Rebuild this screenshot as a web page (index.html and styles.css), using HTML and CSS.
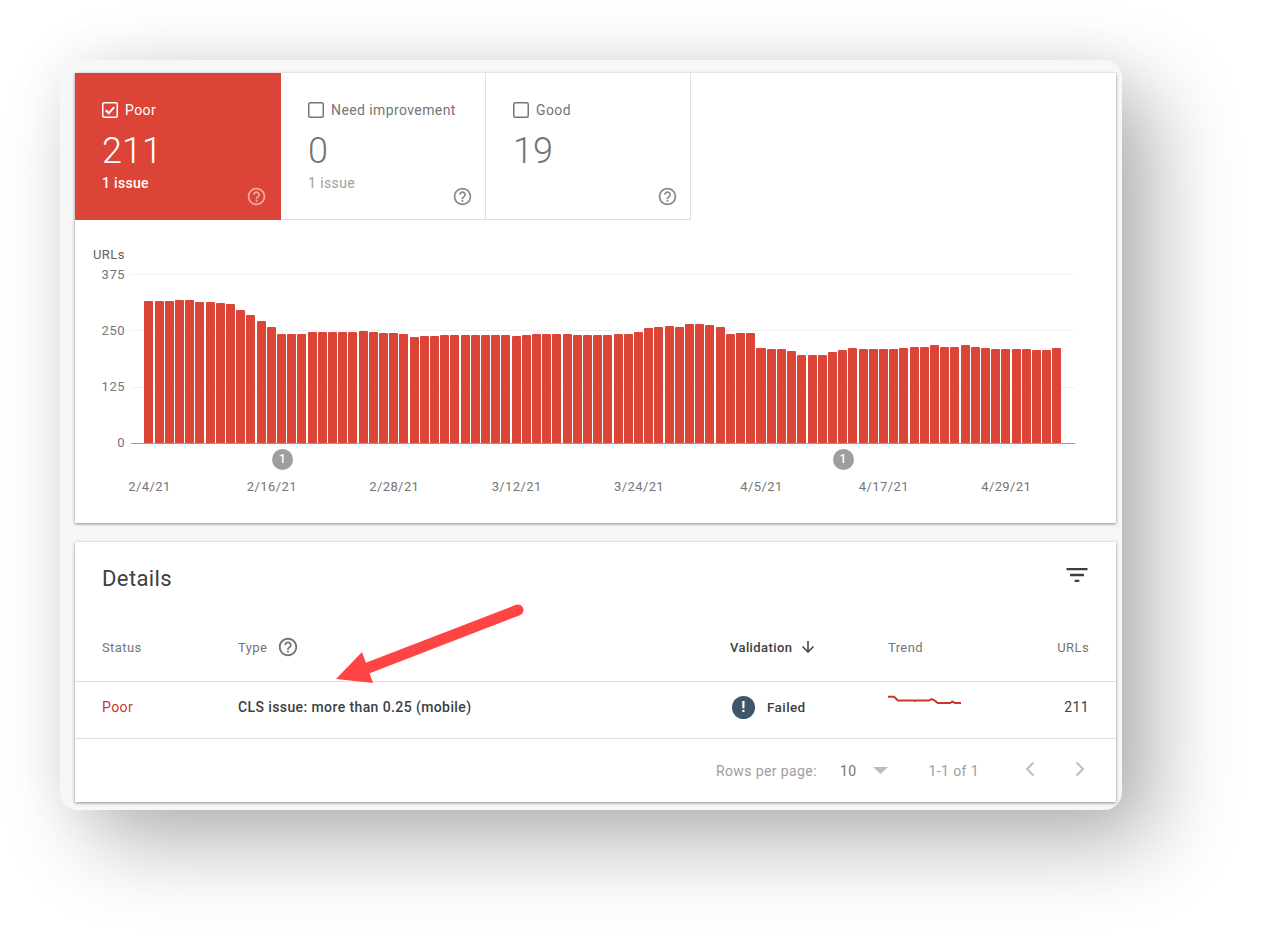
FILE: index.html
```html
<!DOCTYPE html>
<html lang="en">
<head>
<meta charset="utf-8">
<title>Core Web Vitals</title>
<link rel="stylesheet" href="styles.css">
</head>
<body>
<main class="frame">
  <section class="card card-chart">
    <div class="tiles">
      <div class="tile tile-on">
        <div class="tile-label"><svg class="check" viewBox="0 0 16 16"><rect x=".75" y=".75" width="14.5" height="14.5" rx="1.5"/><path d="M3.8 8.2l3 3 5.4-6"/></svg>Poor</div>
        <div class="tile-num">211</div>
        <div class="tile-sub">1 issue</div>
        <svg class="help" viewBox="0 0 24 24"><path d="M11 18h2v-2h-2v2zm1-16C6.48 2 2 6.48 2 12s4.48 10 10 10 10-4.48 10-10S17.52 2 12 2zm0 18c-4.41 0-8-3.59-8-8s3.59-8 8-8 8 3.59 8 8-3.59 8-8 8zm0-14c-2.21 0-4 1.79-4 4h2c0-1.1.9-2 2-2s2 .9 2 2c0 2-3 1.75-3 5h2c0-2.25 3-2.5 3-5 0-2.21-1.79-4-4-4z"/></svg>
      </div>
      <div class="tile">
        <div class="tile-label"><svg class="check" viewBox="0 0 16 16"><rect x=".75" y=".75" width="14.5" height="14.5" rx="1.5"/></svg>Need improvement</div>
        <div class="tile-num">0</div>
        <div class="tile-sub">1 issue</div>
        <svg class="help" viewBox="0 0 24 24"><path d="M11 18h2v-2h-2v2zm1-16C6.48 2 2 6.48 2 12s4.48 10 10 10 10-4.48 10-10S17.52 2 12 2zm0 18c-4.41 0-8-3.59-8-8s3.59-8 8-8 8 3.59 8 8-3.59 8-8 8zm0-14c-2.21 0-4 1.79-4 4h2c0-1.1.9-2 2-2s2 .9 2 2c0 2-3 1.75-3 5h2c0-2.25 3-2.5 3-5 0-2.21-1.79-4-4-4z"/></svg>
      </div>
      <div class="tile">
        <div class="tile-label"><svg class="check" viewBox="0 0 16 16"><rect x=".75" y=".75" width="14.5" height="14.5" rx="1.5"/></svg>Good</div>
        <div class="tile-num">19</div>
        <svg class="help" viewBox="0 0 24 24"><path d="M11 18h2v-2h-2v2zm1-16C6.48 2 2 6.48 2 12s4.48 10 10 10 10-4.48 10-10S17.52 2 12 2zm0 18c-4.41 0-8-3.59-8-8s3.59-8 8-8 8 3.59 8 8-3.59 8-8 8zm0-14c-2.21 0-4 1.79-4 4h2c0-1.1.9-2 2-2s2 .9 2 2c0 2-3 1.75-3 5h2c0-2.25 3-2.5 3-5 0-2.21-1.79-4-4-4z"/></svg>
      </div>
    </div>
    <div class="chart-title">URLs</div>
    <div class="axis">
      <div class="axis-row"><span class="axis-label">375</span><span class="axis-line"></span></div>
      <div class="axis-row"><span class="axis-label">250</span><span class="axis-line"></span></div>
      <div class="axis-row"><span class="axis-label">125</span><span class="axis-line"></span></div>
      <div class="axis-row"><span class="axis-label">0</span><span class="axis-line axis-base"></span></div>
      <div class="bars">
<i style="height:142px"></i><i style="height:142px"></i><i style="height:142px"></i><i style="height:143.3px"></i><i style="height:143.3px"></i><i style="height:141px"></i><i style="height:141px"></i><i style="height:140px"></i><i style="height:138.7px"></i><i style="height:133px"></i><i style="height:128.3px"></i><i style="height:121.7px"></i><i style="height:115.7px"></i><i style="height:109px"></i><i style="height:109px"></i><i style="height:109px"></i><i style="height:111.3px"></i><i style="height:111.3px"></i><i style="height:111.3px"></i><i style="height:111.3px"></i><i style="height:111.3px"></i><i style="height:112.3px"></i><i style="height:111.3px"></i><i style="height:110px"></i><i style="height:110px"></i><i style="height:109px"></i><i style="height:105.7px"></i><i style="height:106.7px"></i><i style="height:106.7px"></i><i style="height:108px"></i><i style="height:108px"></i><i style="height:108px"></i><i style="height:108px"></i>
<i style="height:108px"></i><i style="height:108px"></i><i style="height:108px"></i><i style="height:106.7px"></i><i style="height:108px"></i><i style="height:109px"></i><i style="height:109px"></i><i style="height:109px"></i><i style="height:109px"></i><i style="height:108px"></i><i style="height:108px"></i><i style="height:108px"></i><i style="height:108px"></i><i style="height:109px"></i><i style="height:109px"></i><i style="height:111.3px"></i><i style="height:114.7px"></i><i style="height:115.7px"></i><i style="height:117px"></i><i style="height:115.7px"></i><i style="height:119.3px"></i><i style="height:119.3px"></i><i style="height:118px"></i><i style="height:115.7px"></i><i style="height:109px"></i><i style="height:110px"></i><i style="height:110px"></i><i style="height:95.3px"></i>
<i style="height:94px"></i><i style="height:94px"></i><i style="height:91.7px"></i><i style="height:88.3px"></i><i style="height:88.3px"></i><i style="height:88.3px"></i><i style="height:90.7px"></i><i style="height:93px"></i><i style="height:95.3px"></i><i style="height:94px"></i><i style="height:94px"></i><i style="height:94px"></i><i style="height:94px"></i><i style="height:95.3px"></i><i style="height:96.3px"></i><i style="height:96.3px"></i><i style="height:97.7px"></i><i style="height:96.3px"></i><i style="height:96.3px"></i><i style="height:97.7px"></i><i style="height:96.3px"></i><i style="height:95.3px"></i><i style="height:94px"></i><i style="height:94px"></i><i style="height:94px"></i><i style="height:94px"></i><i style="height:93px"></i><i style="height:93px"></i><i style="height:95.3px"></i>
      </div>
    </div>
    <div class="markers">
      <span class="marker" style="left:197px">1</span>
      <span class="marker" style="left:757.5px">1</span>
    </div>
    <div class="dates">
      <span>2/4/21</span><span>2/16/21</span><span>2/28/21</span><span>3/12/21</span><span>3/24/21</span><span>4/5/21</span><span>4/17/21</span><span>4/29/21</span>
    </div>
  </section>

  <section class="card card-details">
    <header class="details-head">
      <h2 class="details-title">Details</h2>
      <svg class="filter" viewBox="0 0 24 24"><path d="M10 18h4v-2h-4v2zM3 6v2h18V6H3zm3 7h12v-2H6v2z"/></svg>
    </header>
    <div class="row row-head">
      <span>Status</span>
      <span class="with-icon">Type <svg class="help-type" viewBox="0 0 24 24"><path d="M11 18h2v-2h-2v2zm1-16C6.48 2 2 6.48 2 12s4.48 10 10 10 10-4.48 10-10S17.52 2 12 2zm0 18c-4.41 0-8-3.59-8-8s3.59-8 8-8 8 3.59 8 8-3.59 8-8 8zm0-14c-2.21 0-4 1.79-4 4h2c0-1.1.9-2 2-2s2 .9 2 2c0 2-3 1.75-3 5h2c0-2.25 3-2.5 3-5 0-2.21-1.79-4-4-4z"/></svg></span>
      <span class="with-icon sorted">Validation <svg class="sort" viewBox="0 0 24 24"><path d="M20 12l-1.41-1.41L13 16.17V4h-2v12.17l-5.58-5.59L4 12l8 8 8-8z"/></svg></span>
      <span>Trend</span>
      <span class="num">URLs</span>
    </div>
    <div class="row row-data">
      <span class="poor">Poor</span>
      <span class="strong">CLS issue: more than 0.25 (mobile)</span>
      <span class="failed"><span class="failed-icon">!</span>Failed</span>
      <svg class="spark" viewBox="0 0 74 12"><polyline points="0,1.7 6,1.7 10,5.5 26,5.5 27,6 28,5.5 41,5.5 43.5,4 46,5 49.7,8 62,8 64.3,6.7 67,8 73,8"/></svg>
      <span class="num num-data">211</span>
    </div>
    <footer class="pager">
      <span class="pager-label">Rows per page:</span>
      <span class="pager-size">10</span>
      <svg class="caret" viewBox="0 0 15 7"><path d="M0 0h15L7.500 7z"/></svg>
      <span class="pager-range">1-1 of 1</span>
      <svg class="chev" viewBox="0 0 12 16"><path d="M9.500 1.500L3 8l6.500 6.500"/></svg>
      <svg class="chev chev-next" viewBox="0 0 12 16"><path d="M2.500 1.500L9 8l-6.500 6.500"/></svg>
    </footer>
  </section>

  <svg class="arrow" viewBox="0 0 200 90"><path class="arrow-shaft" d="M183 9L25 70"/><path class="arrow-head" d="M1 78L27 51L38 82z"/></svg>
</main>
</body>
</html>
```

FILE: styles.css
```css
* { box-sizing: border-box; }
html, body { margin: 0; background: #fff; }
body {
  height: 951px;
  padding: 60px 140px 0 60px;
  overflow: hidden;
  font-family: Roboto, "Liberation Sans", sans-serif;
  letter-spacing: .4px;
  color: #3c4043;
}
.frame {
  position: relative;
  width: 1062px;
  height: 750px;
  padding: 13px 6px 8px 15px;
  display: flex;
  flex-direction: column;
  gap: 19px;
  background: #f7f7f7;
  border-radius: 18px;
  box-shadow: 32px 32px 85px rgba(0, 0, 0, .3), 0 0 50px rgba(0, 0, 0, .05);
}
.card {
  background: #fff;
  box-shadow: 0 1px 3px rgba(0, 0, 0, .45);
}
.card-chart { height: 450px; }
.card-details { height: 260px; }

/* tiles */
.tiles { display: flex; height: 147px; }
.tile {
  position: relative;
  width: 205px;
  padding: 28px 15px 14px 27px;
  display: flex;
  flex-direction: column;
  border-right: 1px solid #e0e0e0;
  border-bottom: 1px solid #e0e0e0;
  color: #757575;
}
.tile-on {
  width: 206px;
  background: #dd4438;
  color: #fff;
  border-color: #dd4438;
}
.tile-label {
  display: flex;
  align-items: center;
  gap: 7px;
  font-size: 14px;
  line-height: 18px;
}
.check { width: 16px; height: 16px; flex: none; fill: none; stroke: currentColor; stroke-width: 1.5; }
.tile-on .check path { stroke-width: 2; }
.tile-num { margin-top: 12px; font-size: 36px; line-height: 40px; font-weight: 300; letter-spacing: 0; }
.tile-sub { margin-top: 3px; font-size: 14px; line-height: 18px; color: #9e9e9e; }
.tile-on .tile-sub { font-weight: 500; color: #fff; letter-spacing: .3px; }
.help { position: absolute; right: 12.500px; bottom: 12.500px; width: 21px; height: 21px; fill: #8a8a8a; }
.tile-on .help { right: 13.500px; fill: #f2a9a3; }

/* chart */
.chart-title {
  margin: 27px 0 0 18px;
  font-size: 13px;
  line-height: 16px;
  color: #616161;
}
.axis {
  position: relative;
  height: 183px;
  margin: 4.500px 41px 0 18px;
  display: flex;
  flex-direction: column;
  justify-content: space-between;
}
.axis-row { display: flex; align-items: center; gap: 6px; height: 14px; }
.axis-label { width: 32px; text-align: right; font-size: 13px; line-height: 14px; color: #757575; letter-spacing: .5px; }
.axis-line { flex: 1; height: 1px; background: #f1f1f1; }
.axis-base { background: #9e9e9e; }
.bars {
  position: absolute;
  left: 51.300px;
  bottom: 7.500px;
  width: 916.700px;
  display: flex;
  align-items: flex-end;
  gap: 1.200px;
}
.bars i { flex: 1; background: #dd4438; border-radius: 1px 1px 0 0; }
.markers { position: relative; height: 21px; margin-top: -1.500px; }
.marker {
  position: absolute;
  top: 0;
  width: 21px;
  height: 21px;
  border-radius: 50%;
  background: #9e9e9e;
  color: #fff;
  font-size: 12px;
  font-weight: 500;
  line-height: 21px;
  text-align: center;
}
.dates {
  margin: 9px 0 0 13.300px;
  display: grid;
  grid-template-columns: repeat(8, 122.400px);
  font-size: 13px;
  line-height: 16px;
  color: #757575;
  text-align: center;
}

/* details */
.details-head {
  height: 73px;
  padding: 0 25px 0 27px;
  display: flex;
  justify-content: space-between;
}
.details-title { margin: 22px 0 0; font-size: 22px; line-height: 30px; font-weight: 400; color: #3c4043; }
.filter { width: 28px; height: 28px; margin-top: 19px; fill: #3c4043; }
.row {
  display: grid;
  grid-template-columns: 136px 492px 158px 1fr 100px;
  align-items: center;
  padding: 0 27px 0 27px;
  font-size: 13px;
  border-bottom: 1px solid #e0e0e0;
}
.row-head { height: 67px; padding-bottom: 2px; color: #757575; }
.row-data { height: 57px; padding-bottom: 6px; font-size: 14px; }
.with-icon { display: flex; align-items: center; gap: 10px; }
.help-type { width: 22px; height: 22px; fill: #757575; }
.sorted { color: #3c4043; font-weight: 500; gap: 7px; }
.sort { width: 18px; height: 18px; fill: #3c4043; }
.num { text-align: right; }
.num-data { color: #3c4043; }
.poor { color: #c5392c; }
.strong { font-weight: 500; color: #3c4043; }
.failed { display: flex; align-items: center; gap: 12px; padding-left: 2px; font-size: 13.500px; font-weight: 500; color: #3c4043; }
.failed-icon {
  width: 23px;
  height: 23px;
  border-radius: 50%;
  background: #3f5569;
  color: #fff;
  font-size: 15px;
  font-weight: 700;
  line-height: 23px;
  text-align: center;
}
.spark { width: 74px; height: 12px; align-self: start; margin-top: 13px; fill: none; stroke: #c5392c; stroke-width: 2; }

/* pager */
.pager {
  height: 63px;
  padding-right: 31px;
  display: flex;
  align-items: center;
  justify-content: flex-end;
  font-size: 14px;
  color: #9e9e9e;
}
.pager-label { margin-right: 23px; }
.pager-size { margin-right: 16px; color: #757575; }
.caret { width: 15px; height: 7px; margin-right: 41px; fill: #bdbdbd; }
.pager-range { margin-right: 45px; }
.chev { width: 12px; height: 16px; margin-top: -3px; fill: none; stroke: #bdbdbd; stroke-width: 2; }
.chev-next { margin-left: 38px; margin-right: -1px; }

/* annotation */
.arrow {
  position: absolute;
  left: 275px;
  top: 541px;
  width: 200px;
  height: 90px;
  overflow: visible;
}
.arrow-shaft { fill: none; stroke: #ff4444; stroke-width: 11; stroke-linecap: round; }
.arrow-head { fill: #ff4444; }
```
